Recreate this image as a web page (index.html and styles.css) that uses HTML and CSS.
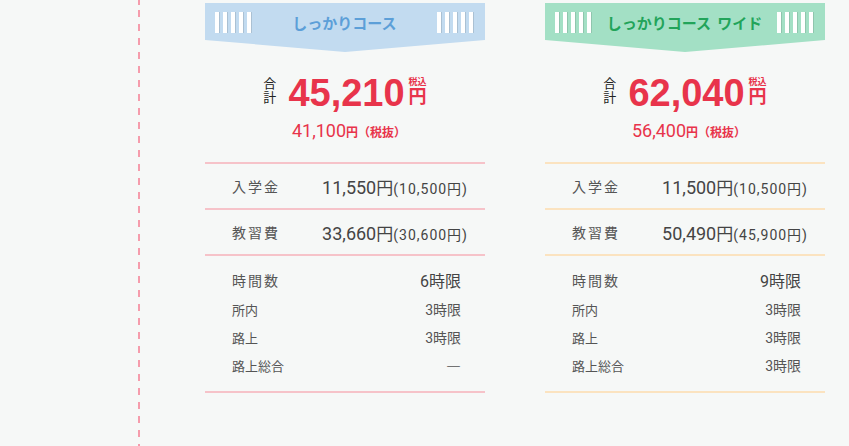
FILE: index.html
```html
<!DOCTYPE html>
<html lang="ja">
<head>
    <meta charset="UTF-8">
    <meta name="viewport" content="width=device-width, initial-scale=1.0">
    <title>料金プラン</title>
    <link rel="stylesheet" href="styles.css">
</head>
<body>
    <div class="page">
        <div class="rail"></div>
        <div class="plans">
            <section class="plan plan-blue">
                <div class="banner">
                    <span class="stripes"></span>
                    <span class="banner-title">しっかりコース</span>
                    <span class="stripes"></span>
                </div>
                <div class="total">
                    <span class="total-label">合<br>計</span>
                    <span class="total-num">45,210</span>
                    <span class="total-yen"><small>税込</small>円</span>
                </div>
                <p class="net">41,100<span>円（税抜）</span></p>
                <div class="fee-row">
                    <span class="fee-label">入学金</span>
                    <span class="fee-value">11,550<span class="yen">円</span><span class="sub">(10,500円)</span></span>
                </div>
                <div class="fee-row">
                    <span class="fee-label">教習費</span>
                    <span class="fee-value">33,660<span class="yen">円</span><span class="sub">(30,600円)</span></span>
                </div>
                <div class="hours">
                    <div class="hours-row main"><span class="hours-label">時間数</span><span>6時限</span></div>
                    <div class="hours-row"><span>所内</span><span>3時限</span></div>
                    <div class="hours-row"><span>路上</span><span>3時限</span></div>
                    <div class="hours-row"><span>路上総合</span><span class="dash">―</span></div>
                </div>
            </section>

            <section class="plan plan-green">
                <div class="banner">
                    <span class="stripes"></span>
                    <span class="banner-title">しっかりコース ワイド</span>
                    <span class="stripes"></span>
                </div>
                <div class="total">
                    <span class="total-label">合<br>計</span>
                    <span class="total-num">62,040</span>
                    <span class="total-yen"><small>税込</small>円</span>
                </div>
                <p class="net">56,400<span>円（税抜）</span></p>
                <div class="fee-row">
                    <span class="fee-label">入学金</span>
                    <span class="fee-value">11,500<span class="yen">円</span><span class="sub">(10,500円)</span></span>
                </div>
                <div class="fee-row">
                    <span class="fee-label">教習費</span>
                    <span class="fee-value">50,490<span class="yen">円</span><span class="sub">(45,900円)</span></span>
                </div>
                <div class="hours">
                    <div class="hours-row main"><span class="hours-label">時間数</span><span>9時限</span></div>
                    <div class="hours-row"><span>所内</span><span>3時限</span></div>
                    <div class="hours-row"><span>路上</span><span>3時限</span></div>
                    <div class="hours-row"><span>路上総合</span><span>3時限</span></div>
                </div>
            </section>
        </div>
    </div>
</body>
</html>
```

FILE: styles.css
```css
body {
    margin: 0;
    background-color: #f6f8f7;
    font-family: Roboto, "Noto Sans CJK JP", sans-serif;
    color: #444;
}
.page {
    display: flex;
    height: 446px;
    overflow: hidden;
}
.rail {
    width: 2px;
    margin-left: 138px;
    background: repeating-linear-gradient(to bottom, #f59cac 0 7px, transparent 7px 14px);
    background-position: 0 10px;
}
.plans {
    display: flex;
    gap: 60px;
    margin-left: 65px;
    padding-top: 3px;
}
.plan {
    width: 280px;
}
.banner {
    height: 49px;
    box-sizing: border-box;
    padding: 9px 11px 0 10px;
    display: flex;
    justify-content: space-between;
    align-items: flex-start;
    clip-path: polygon(0 0, 100% 0, 100% 37px, 50% 100%, 0 37px);
}
.stripes {
    width: 37px;
    height: 21px;
    background: repeating-linear-gradient(to right, #fff 0 4px, rgba(0, 0, 0, 0.12) 4px 5px, transparent 5px 8px);
}
.banner-title {
    font-size: 15px;
    font-weight: bold;
    line-height: 21px;
    word-spacing: 3px;
    font-family: "Noto Sans CJK JP", sans-serif;
}
.plan-blue .banner {
    background: #c2dbf0;
}
.plan-blue .banner-title {
    color: #5c9fd8;
}
.plan-green .banner {
    background: #a3e0c5;
}
.plan-green .banner-title {
    color: #22a45a;
}
.total {
    display: flex;
    justify-content: center;
    align-items: flex-end;
    margin-top: 24px;
    color: #e8344b;
}
.total-label {
    font-size: 13px;
    line-height: 14px;
    color: #222;
    margin-right: 12px;
    margin-bottom: 3px;
}
.total-num {
    font-family: "Liberation Sans", sans-serif;
    font-size: 38px;
    font-weight: bold;
    line-height: 30px;
}
.total-yen {
    display: flex;
    flex-direction: column;
    align-items: center;
    font-size: 18px;
    font-weight: bold;
    line-height: 18px;
    margin-left: 4px;
    margin-bottom: 2px;
}
.total-yen small {
    font-size: 9px;
    line-height: 12px;
}
.net {
    margin: 10px 0 0;
    padding-left: 8px;
    text-align: center;
    font-size: 18px;
    line-height: 26px;
    color: #e8344b;
    height: 44px;
}
.net span {
    font-size: 12px;
    font-weight: bold;
}
.fee-row {
    display: flex;
    justify-content: space-between;
    align-items: center;
    height: 44px;
    padding: 0 17px 0 27px;
}
.fee-label {
    font-size: 14px;
    letter-spacing: 2px;
    color: #555;
}
.fee-value {
    font-size: 18px;
    color: #444;
}
.fee-value .yen {
    font-size: 17px;
}
.fee-value .sub {
    font-size: 14px;
    letter-spacing: 1px;
}
.hours {
    padding: 9px 24px 12px 27px;
}
.hours-row {
    display: flex;
    justify-content: space-between;
    align-items: center;
    height: 28px;
    font-size: 13px;
    color: #555;
}
.hours-row span + span {
    font-size: 14px;
}
.hours-row .dash {
    font-family: "Noto Sans CJK JP", sans-serif;
    font-weight: bold;
    font-size: 15px;
    color: #555;
}
.hours-row.main {
    height: 30px;
}
.hours-row.main .hours-label {
    font-size: 14px;
    letter-spacing: 2px;
}
.hours-row.main span + span {
    font-size: 16px;
    color: #444;
}
.plan-blue .fee-row,
.plan-blue .hours {
    border-top: 2px solid #f6c3c9;
}
.plan-blue .hours {
    border-bottom: 2px solid #f6c3c9;
}
.plan-green .fee-row,
.plan-green .hours {
    border-top: 2px solid #fbe3c0;
}
.plan-green .hours {
    border-bottom: 2px solid #fbe3c0;
}
```
